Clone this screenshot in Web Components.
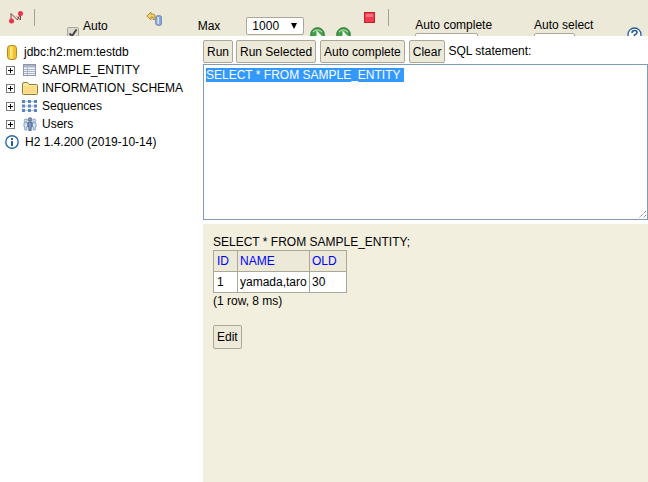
<!DOCTYPE html>
<html>
<head>
<meta charset="utf-8">
<title>H2 Console</title>
<style>
  html, body { margin: 0; height: 100%; overflow: hidden; background: #fff; }
  body { font: 12px "Liberation Sans", Arial, sans-serif; color: #000; }
</style>
</head>
<body>
<h2-console></h2-console>

<script>
const BTN_CSS = `
  .btn {
    font: 12px "Liberation Sans", Arial, sans-serif; color: #000; background: #ece9d8;
    border: 1px solid #aca899; border-radius: 2px; padding: 0 3px; height: 23px;
    box-sizing: border-box; margin: 0; white-space: nowrap;
  }
`;

const GO_ICON = `<circle cx="7.500" cy="7.500" r="6.800" fill="#43a04a" stroke="#2c6f34" stroke-width="1"/>
    <path d="M3 5Q7 1 12 5" fill="none" stroke="#9ad08f" stroke-width="1.500"/>
    <path d="M6.500 3.500 12.500 9.500 6.500 15.500Z" fill="#f4f8f0"/>`;

class H2Toolbar extends HTMLElement {
  constructor() {
    super();
    this.attachShadow({ mode: 'open' });
    this.shadowRoot.innerHTML = `
<style>
  :host { display: block; height: 36px; overflow: hidden; background: #ece9d8; }
  .bar { display: flex; align-items: flex-start; height: 60px; }
  .bar > * { flex: none; }
  .sep { width: 1px; height: 17px; background: #a5a293; }
  .lbl { font-size: 12px; line-height: 14px; white-space: nowrap; }
  .check {
    width: 10px; height: 10px; border: 1px solid #aca899; border-radius: 2px;
    background: #dcdad0; box-sizing: content-box;
  }
  .sel {
    width: 58px; height: 18px; box-sizing: border-box; background: #fff;
    border: 1px solid #aca899; border-radius: 2px; display: flex;
    justify-content: space-between; align-items: center; padding: 0 6px 0 5px;
    line-height: 16px;
  }
  .arrow { width: 0; height: 0; border: 3.500px solid transparent; border-top: 6px solid #000; border-bottom: 0; }
  .box { height: 20px; box-sizing: border-box; border: 1px solid #aca899; border-radius: 2px; background: #fff; }
  svg { display: block; }
</style>
<div class="bar">
  <svg style="margin:11px 0 0 9px" width="15" height="13" viewBox="0 0 15 13">
    <path d="M2 10V2.500L8.500 9 11.500 2V9L8 5.500" fill="none" stroke="#8c3a3a" stroke-width="1"/>
    <circle cx="2.500" cy="10" r="2.500" fill="#e8334a"/>
    <circle cx="11.500" cy="2.500" r="2.500" fill="#e8334a"/>
  </svg>
  <div class="sep" style="margin:9px 0 0 10px"></div>
  <div class="check" style="margin:27px 0 0 32px">
    <svg width="10" height="10" viewBox="0 0 10 10"><path d="M1.500 5.500 4 8 8.500 1.500" fill="none" stroke="#444" stroke-width="2"/></svg>
  </div>
  <span class="lbl" style="margin:19px 0 0 4px">Auto</span>
  <svg style="margin:11px 0 0 38px" width="16" height="15" viewBox="0 0 16 15">
    <path d="M.8 5 5 1.200V3.200H7.500Q9 3.200 9 5V8.500H7V6H5V8.800Z" fill="#f5d36b" stroke="#a9852a" stroke-width=".9"/>
    <rect x="9.700" y="4.500" width="6" height="10" rx="2.500" fill="#8aa5d6" stroke="#6080b8" stroke-width=".8"/>
    <rect x="11.500" y="6" width="1.500" height="7" fill="#dfe7f5"/>
  </svg>
  <span class="lbl" style="margin:19px 0 0 36px">Max</span>
  <div class="sel" style="margin:17px 0 0 26px"><span>1000</span><span class="arrow"></span></div>
  <svg style="margin:27px 0 0 6px" width="15" height="17" viewBox="0 0 15 17">${GO_ICON}</svg>
  <svg style="margin:27px 0 0 11px" width="15" height="17" viewBox="0 0 15 17">${GO_ICON}</svg>
  <svg style="margin:12px 0 0 13px" width="11" height="11" viewBox="0 0 11 11">
    <rect x=".5" y=".5" width="10" height="10" fill="#ee3d4f" stroke="#c6202f"/>
    <rect x="2" y="2" width="7" height="3" fill="#f2707c"/>
  </svg>
  <div class="sep" style="margin:9px 0 0 13px"></div>
  <div style="margin:18px 0 0 26px">
    <div class="lbl">Auto complete</div>
    <div class="box" style="width:63px;margin-top:1px"></div>
  </div>
  <div style="margin:18px 0 0 42px">
    <div class="lbl">Auto select</div>
    <div class="box" style="width:41px;margin-top:1px"></div>
  </div>
  <svg style="margin:27px 0 0 34px" width="15" height="15" viewBox="0 0 15 15">
    <circle cx="7.500" cy="7.500" r="6.500" fill="#fff" stroke="#2a5d9e" stroke-width="1.300"/>
    <path d="M5 6Q5 3.500 7.500 3.500 10 3.500 10 5.500 10 7 7.500 8V9.500M7.500 10.500V12" fill="none" stroke="#2a5d9e" stroke-width="1.700"/>
  </svg>
</div>`;
  }
}
customElements.define('h2-toolbar', H2Toolbar);

const ICONS = {
  table: `<svg width="13" height="12" viewBox="0 0 13 12">
    <rect x=".5" y=".5" width="12" height="11" fill="#f3f5fa" stroke="#8d97a8"/>
    <rect x="1" y="1" width="11" height="2.500" fill="#a9b4c8"/>
    <path d="M1 5.500H12M1 7.500H12M1 9.500H12M4.500 3.500V11" stroke="#a8b2c4" stroke-width="1" fill="none"/></svg>`,
  folder: `<svg width="16" height="14" viewBox="0 0 16 14">
    <path d="M.5 3V12.500Q.5 13.500 1.500 13.500H14.500Q15.500 13.500 15.500 12.500V4.500Q15.500 3.500 14.500 3.500H7L5.500 1.500H2Q.5 1.500 .5 3Z" fill="#fbe9a6" stroke="#8f7a35"/>
    <path d="M1.500 5H14.500V12.500H1.500Z" fill="#f9dc85"/></svg>`,
  seq: `<svg width="15" height="12" viewBox="0 0 15 12">
    <g fill="#5a85c0">
      <rect x="0" y="0" width="3" height="3"/><rect x="6" y="0" width="3" height="3"/><rect x="12" y="0" width="3" height="3"/>
      <rect x="0" y="4.500" width="3" height="3"/><rect x="6" y="4.500" width="3" height="3"/><rect x="12" y="4.500" width="3" height="3"/>
      <rect x="0" y="9" width="3" height="3"/><rect x="6" y="9" width="3" height="3"/><rect x="12" y="9" width="3" height="3"/>
    </g>
    <path d="M3 1.500H6M9 1.500H12M3 6H6M9 6H12M3 10.500H6M9 10.500H12" stroke="#b5c8e2" fill="none"/></svg>`,
  users: `<svg width="14" height="14" viewBox="0 0 14 14">
    <g fill="#dfe8f5" stroke="#5c7eb0" stroke-width=".7">
      <circle cx="2.800" cy="3.500" r="1.500"/><circle cx="11.200" cy="3.500" r="1.500"/>
      <path d="M1 5.800H4.600V9.800H3.800V13H1.800V9.800H1Z"/><path d="M9.400 5.800H13V9.800H12.200V13H10.200V9.800H9.400Z"/>
    </g>
    <g fill="#7b9ccb" stroke="#3d4c66" stroke-width=".7">
      <circle cx="7" cy="2.500" r="1.800"/><path d="M5 5H9V9.800H8.200V13.500H5.800V9.800H5Z"/>
    </g></svg>`
};

class H2TreeRow extends HTMLElement {
  constructor() {
    super();
    this.attachShadow({ mode: 'open' });
  }
  connectedCallback() {
    const icon = ICONS[this.getAttribute('icon')] || '';
    this.shadowRoot.innerHTML = `
<style>
  :host { display: flex; align-items: center; height: 18px; white-space: nowrap; }
  .plus { width: 9px; height: 9px; box-sizing: border-box; border: 1px solid #7a7a7a; background:
    linear-gradient(#000,#000) center/5px 1px no-repeat, linear-gradient(#000,#000) center/1px 5px no-repeat, #fff; margin: 0 0 0 6px; }
  .ico { width: 17px; margin-left: 6px; display: flex; justify-content: center; }
  svg { display: block; }
  .txt { margin-left: 4px; }
</style>
<span class="plus"></span><span class="ico">${icon}</span><span class="txt"><slot></slot></span>`;
  }
}
customElements.define('h2-tree-row', H2TreeRow);

class H2Tree extends HTMLElement {
  constructor() {
    super();
    this.attachShadow({ mode: 'open' });
    this.shadowRoot.innerHTML = `
<style>
  :host { display: block; background: #fff; padding-top: 7px; overflow: hidden; }
  .head { display: flex; align-items: center; height: 18px; white-space: nowrap; }
  svg { display: block; }
</style>
<div class="head">
  <svg style="margin-left:7px" width="10" height="15" viewBox="0 0 10 15">
    <rect x=".5" y=".5" width="9" height="14" rx="3" fill="#f2c230" stroke="#b58a14"/>
    <rect x="3" y="1.500" width="2.500" height="12" fill="#fbe58c"/>
  </svg>
  <span style="margin-left:7px">jdbc:h2:mem:testdb</span>
</div>
<h2-tree-row icon="table">SAMPLE_ENTITY</h2-tree-row>
<h2-tree-row icon="folder">INFORMATION_SCHEMA</h2-tree-row>
<h2-tree-row icon="seq">Sequences</h2-tree-row>
<h2-tree-row icon="users">Users</h2-tree-row>
<div class="head">
  <svg style="margin-left:5px" width="14" height="14" viewBox="0 0 14 14">
    <circle cx="7" cy="7" r="6.200" fill="#fff" stroke="#2a6ab0" stroke-width="1.400"/>
    <rect x="6" y="6" width="2" height="5" fill="#1f5fa8"/><rect x="6" y="3" width="2" height="2" fill="#1f5fa8"/>
  </svg>
  <span style="margin-left:6px">H2 1.4.200 (2019-10-14)</span>
</div>`;
  }
}
customElements.define('h2-tree', H2Tree);

class H2Editor extends HTMLElement {
  constructor() {
    super();
    this.attachShadow({ mode: 'open' });
    this.shadowRoot.innerHTML = `
<style>
  ${BTN_CSS}
  :host { display: flex; flex-direction: column; background: #fff; height: 188px; box-sizing: border-box; padding-top: 4px; }
  .row { display: flex; align-items: flex-start; height: 24px; }
  .row .btn + .btn { margin-left: 4px; }
  .row .btn:nth-child(2) { margin-left: 3px; }
  .row span { margin-left: 3px; line-height: 23px; }
  .area {
    height: 156px; box-sizing: border-box; border: 1px solid #7f9db9;
    padding: 3px 2px; position: relative; line-height: 14px; overflow: hidden;
  }
  .area b { font-weight: 400; background: #3399ff; color: #fff; display: inline-block; height: 14px; padding-right: 3px; }
  .grip { position: absolute; right: 0; bottom: 0; }
</style>
<div class="row">
  <button class="btn">Run</button>
  <button class="btn">Run Selected</button>
  <button class="btn">Auto complete</button>
  <button class="btn">Clear</button>
  <span>SQL statement:</span>
</div>
<div class="area"><b>SELECT * FROM SAMPLE_ENTITY</b>
  <svg class="grip" width="9" height="9" viewBox="0 0 9 9"><path d="M8 1 1 8M8 5 5 8" stroke="#555" stroke-dasharray="1 1" fill="none"/></svg>
</div>`;
  }
}
customElements.define('h2-editor', H2Editor);

class H2Result extends HTMLElement {
  constructor() {
    super();
    this.attachShadow({ mode: 'open' });
    this.shadowRoot.innerHTML = `
<style>
  ${BTN_CSS}
  :host { display: block; background: #f3efde; padding: 11px 10px 0; overflow: hidden; }
  .sql { line-height: 14px; margin-bottom: 1px; }
  table { border-collapse: collapse; table-layout: fixed; width: 133px; }
  th, td { border: 1px solid #aca899; padding: 0 2px; height: 21px; box-sizing: border-box; font-size: 12px; font-weight: 400; text-align: left; white-space: nowrap; }
  th:first-child, td:first-child { padding-left: 3px; }
  th { background: #ece9d8; color: #0000ff; }
  td { background: #fff; padding-bottom: 1px; }
  .meta { line-height: 14px; margin-top: 1px; }
  .btn { margin-top: 17px; height: 24px; display: block; }
</style>
<div class="sql">SELECT * FROM SAMPLE_ENTITY;</div>
<table>
  <tr><th style="width:24px">ID</th><th style="width:72px">NAME</th><th style="width:37px">OLD</th></tr>
  <tr><td>1</td><td>yamada,taro</td><td>30</td></tr>
</table>
<div class="meta">(1 row, 8 ms)</div>
<button class="btn">Edit</button>`;
  }
}
customElements.define('h2-result', H2Result);

class H2Console extends HTMLElement {
  constructor() {
    super();
    this.attachShadow({ mode: 'open' });
    this.shadowRoot.innerHTML = `
<style>
  :host { display: grid; grid-template-rows: 36px 1fr; height: 482px; width: 648px; overflow: hidden; }
  .main { display: grid; grid-template-columns: 203px 445px; min-height: 0; }
  .right { display: flex; flex-direction: column; min-height: 0; }
  h2-result { flex: 1; }
</style>
<h2-toolbar></h2-toolbar>
<div class="main">
  <h2-tree></h2-tree>
  <div class="right">
    <h2-editor></h2-editor>
    <h2-result></h2-result>
  </div>
</div>`;
  }
}
customElements.define('h2-console', H2Console);
</script>
</body>
</html>
